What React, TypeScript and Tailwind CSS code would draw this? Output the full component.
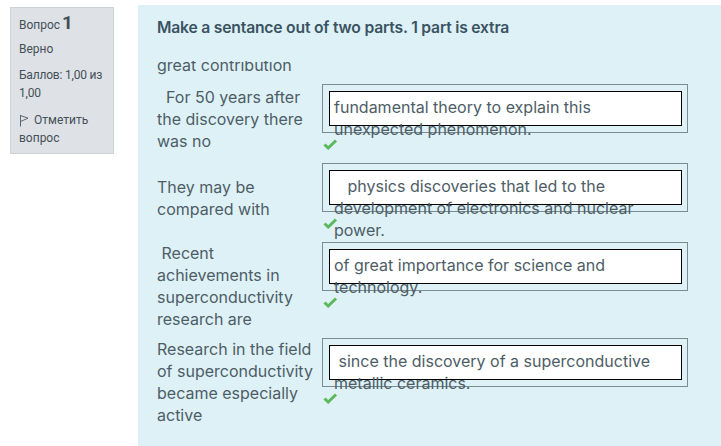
import React from "react";

type Row = {
  left: string[];
  answer: string[];
  mt: string;
};

const rows: Row[] = [
  {
    left: ["\u00a0\u00a0For 50 years after", "the discovery there", "was no"],
    answer: ["fundamental theory to explain this", "unexpected phenomenon."],
    mt: "mt-[0px]",
  },
  {
    left: ["They may be", "compared with"],
    answer: ["\u00a0\u00a0\u00a0physics discoveries that led to the", "development of electronics and nuclear", "power."],
    mt: "mt-[10px]",
  },
  {
    left: ["\u00a0Recent", "achievements in", "superconductivity", "research are"],
    answer: ["of great importance for science and", "technology."],
    mt: "mt-[10px]",
  },
  {
    left: ["Research in the field", "of superconductivity", "became especially", "active"],
    answer: ["\u00a0since the discovery of a superconductive", "metallic ceramics."],
    mt: "mt-[8px]",
  },
];

function Check() {
  return (
    <svg width="15" height="11" viewBox="0 0 15 11" className="block">
      <path d="M1.5 5.5 L5.2 9 L13 1.5" fill="none" stroke="#5cb85c" strokeWidth="3" />
    </svg>
  );
}

function Flag() {
  return (
    <svg width="10" height="13" viewBox="0 0 10 13" className="block">
      <path d="M1.5 1 V12.5" stroke="#5b6770" strokeWidth="1" fill="none" />
      <path d="M1.5 1.5 L9 4.2 L1.5 7.5" stroke="#5b6770" strokeWidth="1" fill="none" strokeLinejoin="round" />
    </svg>
  );
}

export default function App() {
  return (
    <div className="flex h-[446px] w-[721px] overflow-hidden bg-white font-['Inter',sans-serif]">
      {/* question info */}
      <div className="w-[138px] shrink-0 pl-[10px] pt-[7px]">
        <div className="h-[147px] w-[104px] border border-[#cdd2d6] bg-[#dee2e6] px-[8px] pt-[6px] font-['Roboto',sans-serif] text-[12px] leading-[18px] text-[#454f57]">
          <div className="flex h-[18px] items-baseline">
            <span>Вопрос</span>
            <span className="ml-[2px] text-[19px] font-bold leading-[18px]">1</span>
          </div>
          <div className="mt-[8px]">Верно</div>
          <div className="mt-[8px] whitespace-nowrap tracking-[-0.2px]">
            Баллов: 1,00 из
            <br />
            1,00
          </div>
          <div className="mt-[9px] flex items-center gap-[5px]">
            <Flag />
            <span>Отметить</span>
          </div>
          <div>вопрос</div>
        </div>
      </div>

      {/* question content */}
      <div className="mt-[5px] flex-1 bg-[#def1f7] pl-[19px] pt-[12px] text-[16px] leading-[22px] text-[#4d5d66]">
        <h2 className="text-[15.7px] font-semibold leading-[22px] tracking-[-0.2px] text-[#3a5362]">
          Make a sentance out of two parts. 1 part is extra
        </h2>

        {/* tail of previous answer, clipped by scroll */}
        <div className="mt-[22px] h-[17px] overflow-hidden">
          <div className="-mt-[7px]">great contribution</div>
        </div>

        <div className="mt-[6px] flex flex-col">
          {rows.map((r, i) => (
            <div key={i} className={`flex ${r.mt}`}>
              <div className="w-[165px] shrink-0 self-center whitespace-pre">
                {r.left.map((l, j) => (
                  <div key={j}>{l}</div>
                ))}
              </div>
              <div className="h-[69px] w-[366px]">
                <div className="h-[49px] border border-[#7f8c8f] pl-[6px] pr-[5px] pt-[6px]">
                  <div className="h-[35px] border border-black bg-white pl-[4px]">
                    <div className="whitespace-pre pt-[4px]">
                      {r.answer.map((a, j) => (
                        <div key={j}>{a}</div>
                      ))}
                    </div>
                  </div>
                </div>
                <div className="ml-[1px] mt-[6px]">
                  <Check />
                </div>
              </div>
            </div>
          ))}
        </div>
      </div>
    </div>
  );
}
